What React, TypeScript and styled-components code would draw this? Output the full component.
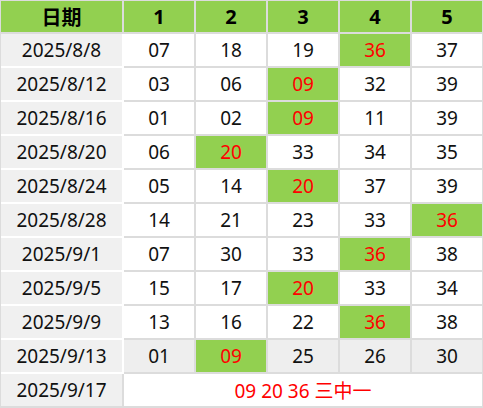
import React from "react";
import styled, { createGlobalStyle, css } from "styled-components";

const Global = createGlobalStyle`
  html, body { margin: 0; padding: 0; background: #fff; }
  body { font-family: "Noto Sans", "Noto Sans CJK SC", sans-serif; }
`;

const Grid = styled.div`
  width: 483px;
  height: 408px;
  box-sizing: border-box;
  display: grid;
  grid-template-columns: 121px repeat(5, 1fr);
  grid-template-rows: 31px repeat(11, 32px);
  gap: 2px;
  padding: 1px 1px 2px 1px;
  background: #dcdcdc;
`;

type Kind = "head" | "date" | "num" | "hit" | "dim" | "summary";

const Cell = styled.div<{ $kind: Kind; $open?: boolean }>`
  display: flex;
  align-items: center;
  justify-content: center;
  font-size: 19px;
  color: #111;
  background: #fff;
  white-space: nowrap;
  ${(p) =>
    p.$kind === "head" &&
    css`
      background: #92d050;
      color: #000;
      font-weight: 700;
      font-size: 20px;
    `}
  ${(p) =>
    p.$kind === "date" &&
    css`
      background: #f0f0f0;
    `}
  ${(p) =>
    p.$open &&
    css`
      box-shadow: 2px 2px 0 #fff, 0 2px 0 #fff, 2px 0 0 #fff;
    `}
  ${(p) =>
    p.$kind === "hit" &&
    css`
      background: #92d050;
      color: #ff0000;
    `}
  ${(p) =>
    p.$kind === "dim" &&
    css`
      background: #eeeeee;
    `}
  ${(p) =>
    p.$kind === "summary" &&
    css`
      grid-column: span 5;
      color: #ff0000;
    `}
`;

const rows: { date: string; nums: string[]; hit: number; dim?: boolean }[] = [
  { date: "2025/8/8", nums: ["07", "18", "19", "36", "37"], hit: 3 },
  { date: "2025/8/12", nums: ["03", "06", "09", "32", "39"], hit: 2 },
  { date: "2025/8/16", nums: ["01", "02", "09", "11", "39"], hit: 2 },
  { date: "2025/8/20", nums: ["06", "20", "33", "34", "35"], hit: 1 },
  { date: "2025/8/24", nums: ["05", "14", "20", "37", "39"], hit: 2 },
  { date: "2025/8/28", nums: ["14", "21", "23", "33", "36"], hit: 4 },
  { date: "2025/9/1", nums: ["07", "30", "33", "36", "38"], hit: 3 },
  { date: "2025/9/5", nums: ["15", "17", "20", "33", "34"], hit: 2 },
  { date: "2025/9/9", nums: ["13", "16", "22", "36", "38"], hit: 3 },
  { date: "2025/9/13", nums: ["01", "09", "25", "26", "30"], hit: 1, dim: true },
];

export default function App() {
  return (
    <>
      <Global />
      <Grid>
        <Cell $kind="head">日期</Cell>
        {["1", "2", "3", "4", "5"].map((h) => (
          <Cell key={h} $kind="head">
            {h}
          </Cell>
        ))}
        {rows.map((r) => (
          <React.Fragment key={r.date}>
            <Cell $kind="date" $open>
              {r.date}
            </Cell>
            {r.nums.map((n, i) => (
              <Cell key={i} $kind={i === r.hit ? "hit" : r.dim ? "dim" : "num"}>
                {n}
              </Cell>
            ))}
          </React.Fragment>
        ))}
        <Cell $kind="date">2025/9/17</Cell>
        <Cell $kind="summary">09 20 36 三中一</Cell>
      </Grid>
    </>
  );
}
